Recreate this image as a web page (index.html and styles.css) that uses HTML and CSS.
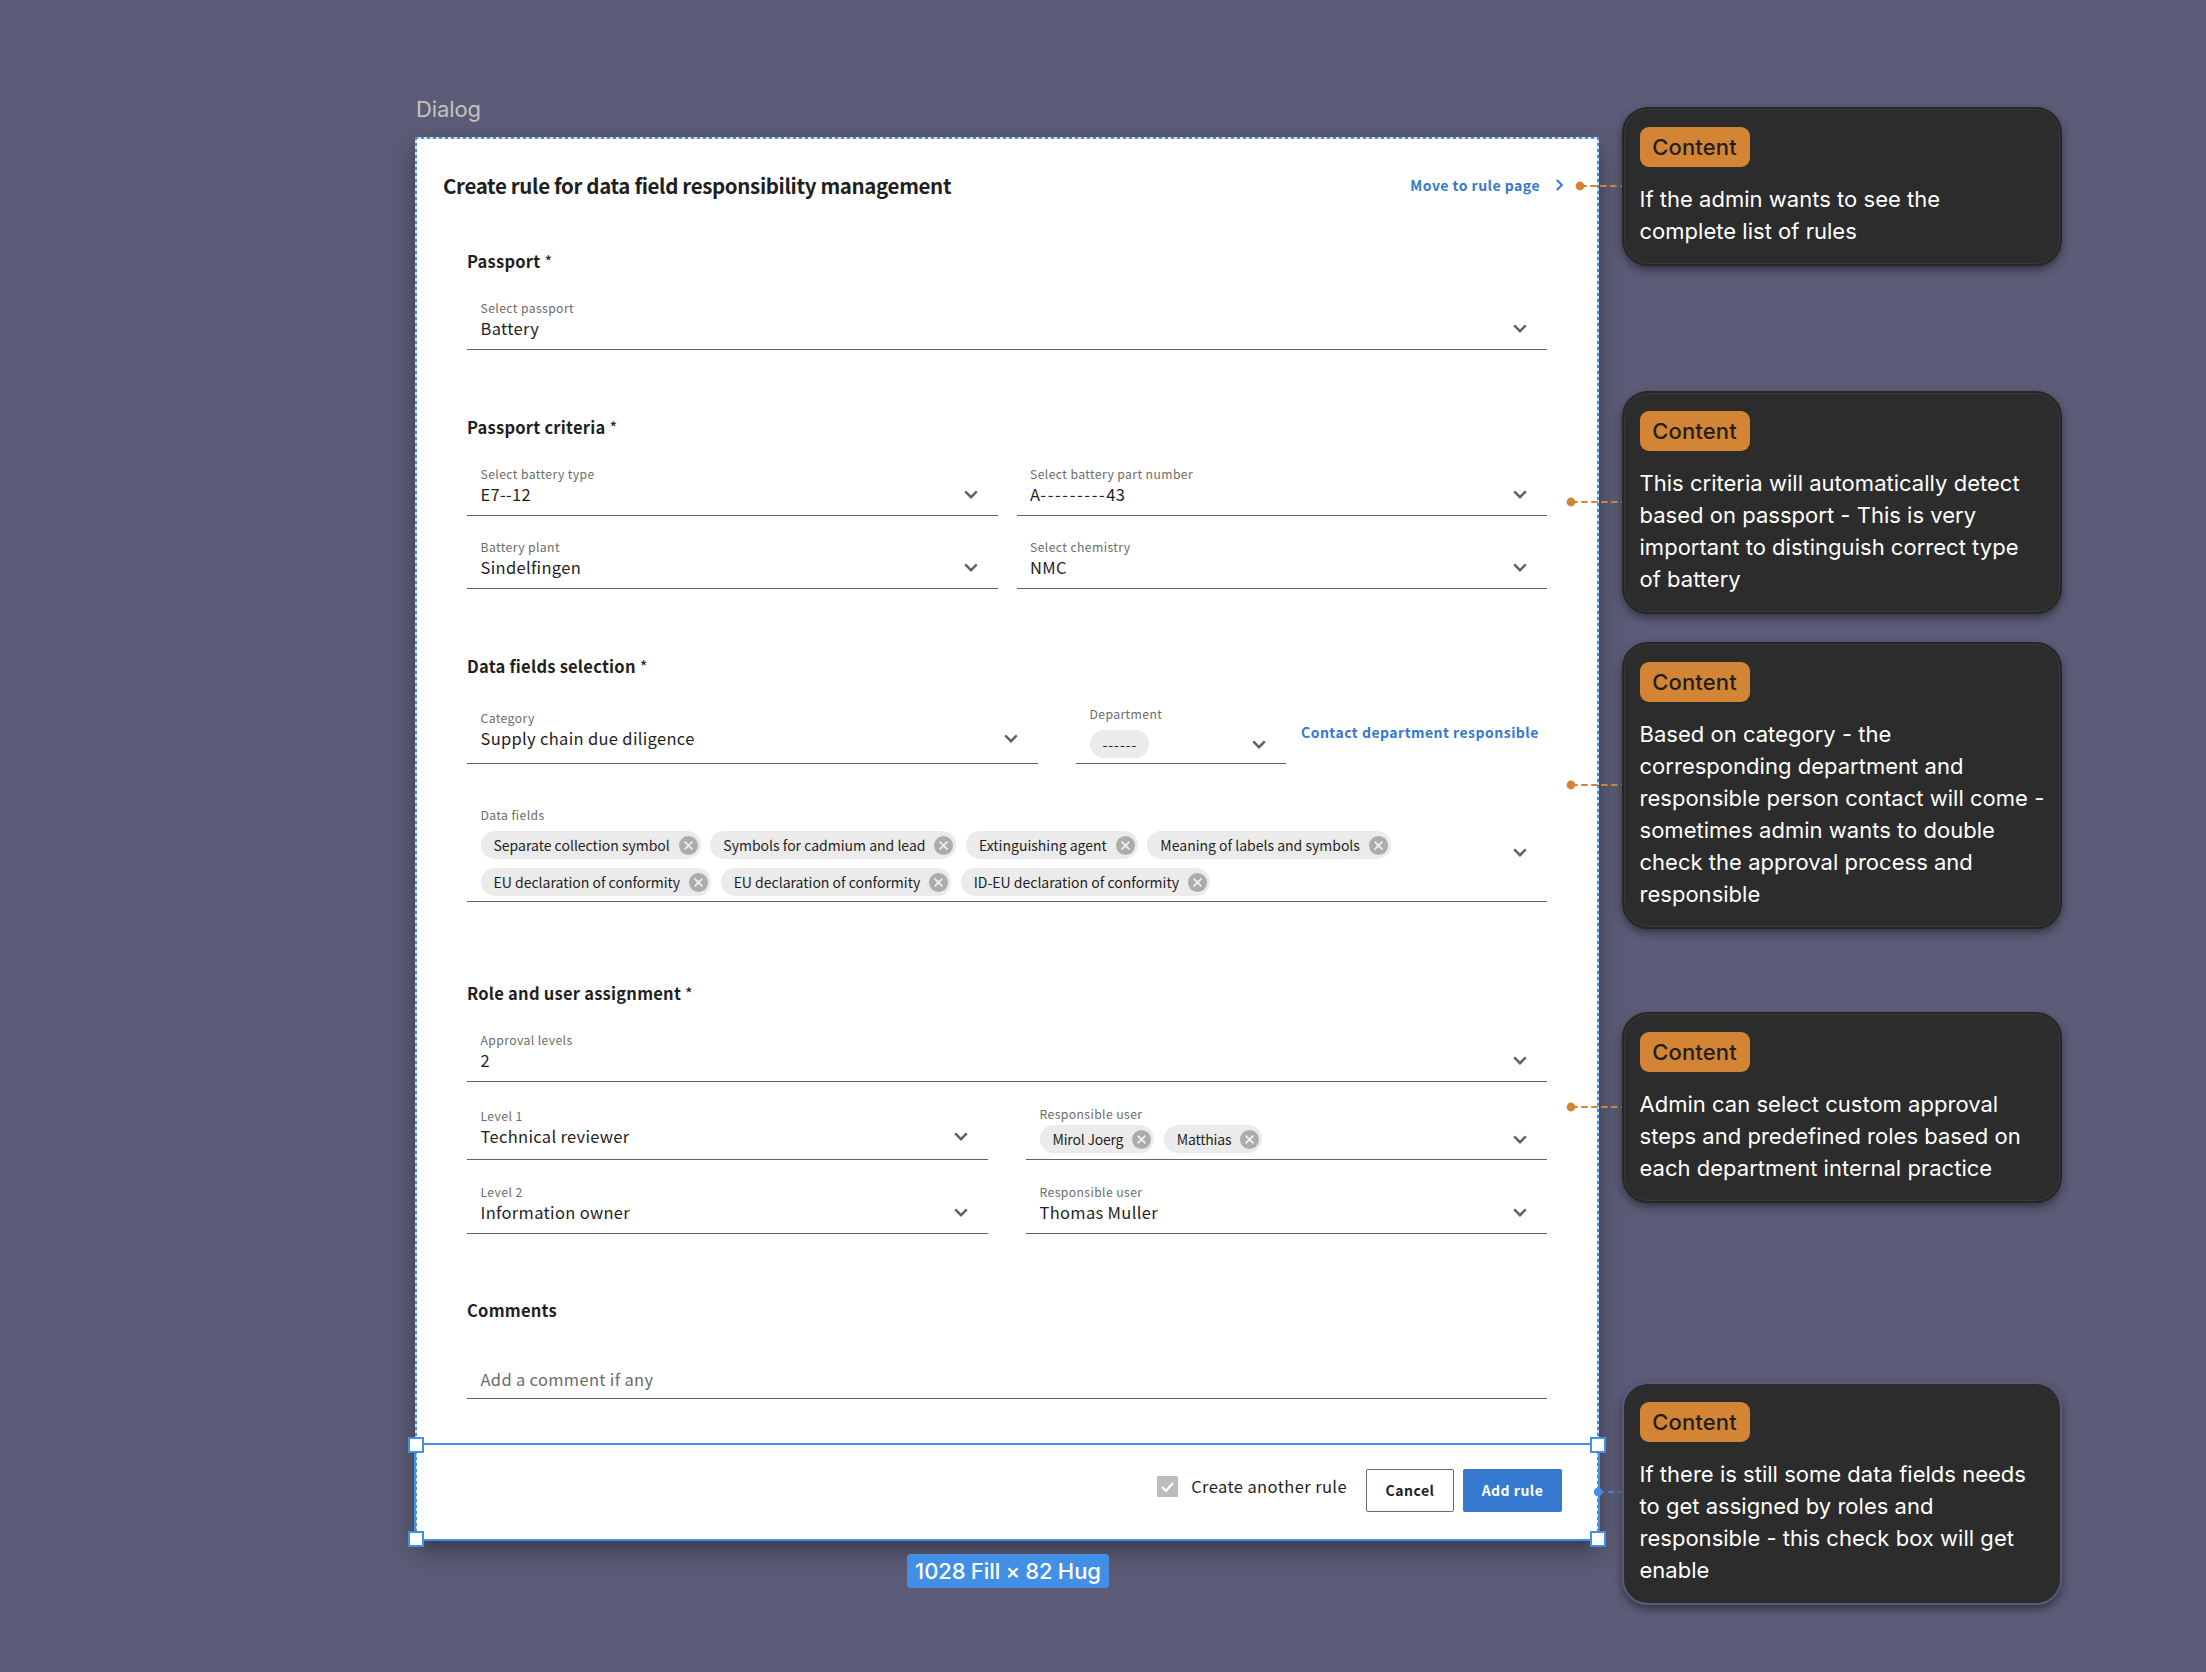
FILE: index.html
```
<!DOCTYPE html>
<html lang="en">
<head>
  <meta charset="UTF-8" />
  <meta name="viewport" content="width=device-width, initial-scale=1" />
  <title>Create rule for data field responsibility management</title>
  <link rel="stylesheet" href="styles.css">
</head>
<body>
  <!-- shared icons -->
  <svg class="sprite" width="0" height="0">
    <symbol id="chevron" viewBox="0 0 14 9">
      <path d="M1.2 1.3 L7 7.2 L12.8 1.3" fill="none" stroke="#606060" stroke-width="2.4" />
    </symbol>
    <symbol id="remove" viewBox="0 0 19 19">
      <circle cx="9.5" cy="9.5" r="9.5" fill="#abadac" />
      <path d="M5.6 5.6 L13.4 13.4 M13.4 5.6 L5.6 13.4" stroke="#f2f2f2" stroke-width="1.6" />
    </symbol>
    <symbol id="link-orange" viewBox="0 0 56 10">
      <circle cx="5" cy="5" r="4.4" fill="#d38434" />
      <path d="M5 5 H56" stroke="#d38434" stroke-width="2" stroke-dasharray="6.5 3.5" stroke-dashoffset="-0.2" />
    </symbol>
  </svg>

  <div class="canvas">
    <div class="frame-name">Dialog</div>

    <div class="dialog">
      <div class="dialog-header">
        <h2>Create rule for data field responsibility management</h2>
        <a class="text-link">Move to rule page
          <svg class="next" width="9" height="12" viewBox="0 0 9 12"><path d="M1.8 1 L6.9 6 L1.8 11" fill="none" stroke="#3679d0" stroke-width="2" /></svg>
        </a>
      </div>

      <form class="dialog-form">
        <section>
          <h3>Passport <span>*</span></h3>
          <div class="field">
            <label>Select passport</label>
            <div class="value">Battery <svg class="chevron"><use href="#chevron" /></svg></div>
          </div>
        </section>

        <section>
          <h3>Passport criteria <span>*</span></h3>
          <div class="criteria">
            <div class="field">
              <label>Select battery type</label>
              <div class="value">E7--12 <svg class="chevron"><use href="#chevron" /></svg></div>
            </div>
            <div class="field">
              <label>Select battery part number</label>
              <div class="value"><span>A<span class="dashes">---------</span>43</span> <svg class="chevron"><use href="#chevron" /></svg></div>
            </div>
            <div class="field">
              <label>Battery plant</label>
              <div class="value">Sindelfingen <svg class="chevron"><use href="#chevron" /></svg></div>
            </div>
            <div class="field">
              <label>Select chemistry</label>
              <div class="value">NMC <svg class="chevron"><use href="#chevron" /></svg></div>
            </div>
          </div>
        </section>

        <section class="data-selection">
          <h3>Data fields selection <span>*</span></h3>
          <div class="category-row">
            <div class="field category">
              <label>Category</label>
              <div class="value">Supply chain due diligence <svg class="chevron"><use href="#chevron" /></svg></div>
            </div>
            <div class="field department">
              <label>Department</label>
              <div class="value chip-value">
                <div class="chips"><span class="chip plain">------</span></div>
                <svg class="chevron"><use href="#chevron" /></svg>
              </div>
            </div>
            <a class="text-link contact">Contact department responsible</a>
          </div>
          <div class="field data-fields">
            <label>Data fields</label>
            <div class="value chip-value">
              <div class="chips">
                <span class="chip">Separate collection symbol <svg><use href="#remove" /></svg></span>
                <span class="chip">Symbols for cadmium and lead <svg><use href="#remove" /></svg></span>
                <span class="chip">Extinguishing agent <svg><use href="#remove" /></svg></span>
                <span class="chip">Meaning of labels and symbols <svg><use href="#remove" /></svg></span>
                <span class="chip">EU declaration of conformity <svg><use href="#remove" /></svg></span>
                <span class="chip">EU declaration of conformity <svg><use href="#remove" /></svg></span>
                <span class="chip">ID-EU declaration of conformity <svg><use href="#remove" /></svg></span>
              </div>
              <svg class="chevron"><use href="#chevron" /></svg>
            </div>
          </div>
        </section>

        <section class="roles">
          <h3>Role and user assignment <span>*</span></h3>
          <div class="field">
            <label>Approval levels</label>
            <div class="value">2 <svg class="chevron"><use href="#chevron" /></svg></div>
          </div>
          <div class="role-row">
            <div class="field level-one">
              <label>Level 1</label>
              <div class="value">Technical reviewer <svg class="chevron"><use href="#chevron" /></svg></div>
            </div>
            <div class="field users">
              <label>Responsible user</label>
              <div class="value chip-value">
                <div class="chips">
                  <span class="chip">Mirol Joerg <svg><use href="#remove" /></svg></span>
                  <span class="chip">Matthias <svg><use href="#remove" /></svg></span>
                </div>
                <svg class="chevron"><use href="#chevron" /></svg>
              </div>
            </div>
          </div>
          <div class="role-row">
            <div class="field">
              <label>Level 2</label>
              <div class="value">Information owner <svg class="chevron"><use href="#chevron" /></svg></div>
            </div>
            <div class="field">
              <label>Responsible user</label>
              <div class="value">Thomas Muller <svg class="chevron"><use href="#chevron" /></svg></div>
            </div>
          </div>
        </section>

        <section class="comments">
          <h3>Comments</h3>
          <div class="field">
            <div class="value">Add a comment if any</div>
          </div>
        </section>
      </form>

      <div class="dialog-footer">
        <div class="checkbox">
          <svg width="21" height="21" viewBox="0 0 21 21">
            <rect width="21" height="21" rx="1.5" fill="#bcbcbc" />
            <path d="M5 11 L9 14.8 L16 7" fill="none" stroke="#fff" stroke-width="2.2" />
          </svg>
          <span>Create another rule</span>
        </div>
        <button type="button" class="btn btn-cancel">Cancel</button>
        <button type="button" class="btn btn-add">Add rule</button>
      </div>

      <!-- selected layer outline with its handles -->
      <div class="outline"></div>
      <div class="selection">
        <i class="handle tl"></i>
        <i class="handle tr"></i>
        <i class="handle bl"></i>
        <i class="handle br"></i>
        <div class="size">1028 Fill × 82 Hug</div>
      </div>
    </div>

    <svg class="connector c1"><use href="#link-orange" /></svg>
    <svg class="connector c2"><use href="#link-orange" /></svg>
    <svg class="connector c3"><use href="#link-orange" /></svg>
    <svg class="connector c4"><use href="#link-orange" /></svg>
    <svg class="connector c5" viewBox="0 0 56 10">
      <circle cx="5" cy="5" r="4.2" fill="#4290e6" />
      <path d="M5 5 H56" stroke="#4290e6" stroke-width="1.6" stroke-dasharray="6 4" />
    </svg>

    <div class="note n1">
      <div class="tag">Content</div>
      <p>If the admin wants to see the<br>complete list of rules</p>
    </div>
    <div class="note n2">
      <div class="tag">Content</div>
      <p>This criteria will automatically detect<br>based on passport - This is very<br>important to distinguish correct type<br>of battery</p>
    </div>
    <div class="note n3">
      <div class="tag">Content</div>
      <p>Based on category - the<br>corresponding department and<br>responsible person contact will come -<br>sometimes admin wants to double<br>check the approval process and<br>responsible</p>
    </div>
    <div class="note n4">
      <div class="tag">Content</div>
      <p>Admin can select custom approval<br>steps and predefined roles based on<br>each department internal practice</p>
    </div>
    <div class="note n5">
      <div class="tag">Content</div>
      <p>If there is still some data fields needs<br>to get assigned by roles and<br>responsible - this check box will get<br>enable</p>
    </div>
  </div>
</body>
</html>
```
FILE: styles.css
```
* {
  box-sizing: border-box;
}
body {
  margin: 0;
  background: #5c5c78;
  font-family: 'Noto Sans CJK SC', 'Open Sans', sans-serif;
  color: #1f1f1f;
}
h2, h3, p {
  margin: 0;
}
.sprite {
  position: absolute;
}
.canvas {
  position: relative;
  width: 2206px;
  height: 1672px;
  overflow: hidden;
}
.frame-name {
  position: absolute;
  left: 416px;
  top: 93px;
  font: 400 22px/32px Inter, sans-serif;
  letter-spacing: -0.1px;
  color: #c4c2bd;
}

/* dialog */
.dialog {
  position: absolute;
  left: 416px;
  top: 137px;
  width: 1182px;
  height: 1403px;
  background: #fff;
  display: flex;
  flex-direction: column;
  box-shadow: 0 10px 22px rgba(20, 20, 25, 0.5);
}
.outline {
  position: absolute;
  inset: 0 -1px -1px;
  background:
    repeating-linear-gradient(90deg, #4290e6 0 3px, #cfe0f5 3px 6px) 0 0 / 100% 2px no-repeat,
    repeating-linear-gradient(90deg, #4290e6 0 3px, #cfe0f5 3px 6px) 0 100% / 100% 2px no-repeat,
    repeating-linear-gradient(180deg, #4290e6 0 3px, #cfe0f5 3px 6px) 0 0 / 2px 100% no-repeat,
    repeating-linear-gradient(180deg, #4290e6 0 3px, #cfe0f5 3px 6px) 100% 0 / 2px 100% no-repeat;
}
.dialog-header {
  height: 97px;
  padding: 0 34px 1px 27px;
  display: flex;
  justify-content: space-between;
  align-items: center;
}
.dialog-header h2 {
  font-size: 20.5px;
  line-height: 28px;
  letter-spacing: -0.36px;
}
.text-link {
  display: flex;
  align-items: center;
  font-size: 14px;
  line-height: 20px;
  font-weight: bold;
  letter-spacing: 0.48px;
  color: #3679d0;
}
.next {
  margin-left: 15px;
}
.dialog-form {
  flex: 1;
  padding: 15px 51px 0;
}
section {
  margin-bottom: 65px;
}
h3 {
  margin-bottom: 27px;
  font-size: 16.5px;
  line-height: 24px;
  letter-spacing: 0.24px;
}
h3 span {
  font-weight: 400;
}

/* fields */
.field {
  height: 50px;
  padding: 0 20px 0 13.5px;
  border-bottom: 1px solid #626262;
}
.field label {
  display: block;
  font-size: 12.2px;
  line-height: 16px;
  letter-spacing: 0.4px;
  color: #6c6c6c;
}
.value {
  display: flex;
  justify-content: space-between;
  align-items: center;
  height: 24px;
  font-size: 16.5px;
  line-height: 24px;
  letter-spacing: 0.32px;
}
.dashes {
  letter-spacing: 1.6px;
}
.chevron {
  width: 14px;
  height: 9px;
  flex: none;
  margin-top: 1px;
}
.criteria {
  display: grid;
  grid-template-columns: 1fr 1fr;
  gap: 23px 19px;
}
.category-row {
  display: flex;
  align-items: flex-end;
  height: 59px;
}
.category {
  width: 571px;
  height: 54px;
  margin-right: 38px;
}
.department {
  width: 210px;
  height: 58px;
  margin-right: 15px;
}
.contact {
  align-self: flex-start;
  margin-top: 17px;
}
.chip-value {
  height: auto;
}
.department .chip-value {
  margin-top: 8px;
}
.data-selection {
  margin-bottom: 79px;
}
.data-fields {
  height: 95px;
  margin-top: 43px;
}
.data-fields .chip-value {
  margin-top: 8px;
  align-items: flex-start;
}
.data-fields .chevron {
  margin-top: 17px;
}
.chips {
  display: flex;
  flex-wrap: wrap;
  gap: 9px 9.5px;
  max-width: 940px;
}
.chip {
  display: flex;
  align-items: center;
  gap: 9px;
  height: 28px;
  padding: 0 3px 0 13px;
  border-radius: 14px;
  background: #ebebeb;
  font-size: 14px;
  line-height: 28px;
  letter-spacing: 0;
}
.chip svg {
  width: 19px;
  height: 19px;
}
.chip.plain {
  padding: 0 12px 0 13px;
  letter-spacing: 0.95px;
  line-height: 26px;
}
.roles {
  margin-bottom: 64px;
}
.role-row {
  display: grid;
  grid-template-columns: 1fr 1fr;
  gap: 38px;
  align-items: end;
  margin-top: 24px;
}
.level-one {
  height: 52px;
}
.users {
  height: 54px;
}
.users .chip-value {
  margin-top: 3px;
}
.users .chip {
  letter-spacing: -0.2px;
}
.comments {
  margin-bottom: 0;
}
.comments .field {
  padding-top: 18px;
}
.comments .value {
  color: #6c6c6c;
}

/* footer */
.dialog-footer {
  height: 96px;
  padding: 25px 36px 0 0;
  display: flex;
  justify-content: flex-end;
  align-items: flex-start;
}
.checkbox {
  display: flex;
  align-items: center;
  margin: 6px 19px 0 0;
  font-size: 16.5px;
  line-height: 24px;
  letter-spacing: 0.4px;
}
.checkbox span {
  margin: -1px 0 0 13px;
}
.btn {
  height: 43px;
  padding: 0 0 1px;
  border-radius: 2px;
  font: bold 14px/20px 'Noto Sans CJK SC', sans-serif;
  letter-spacing: 0.5px;
}
.btn-cancel {
  width: 88px;
  margin-right: 9px;
  border: 1px solid #6a6a6a;
  background: #fff;
  color: #1f1f1f;
}
.btn-add {
  width: 99px;
  border: none;
  background: #3679d0;
  color: #fff;
}

/* selection */
.selection {
  position: absolute;
  left: -2px;
  right: -2px;
  top: 1306px;
  bottom: -1px;
  border: 2px solid #4290e6;
}
.handle {
  position: absolute;
  width: 16px;
  height: 16px;
  background: #fff;
  border: 2px solid #4290e6;
}
.tl { left: -8px; top: -8px; }
.tr { right: -8px; top: -8px; }
.bl { left: -8px; bottom: -8px; }
.br { right: -8px; bottom: -8px; }
.size {
  position: absolute;
  left: 491px;
  top: 109px;
  width: 202px;
  height: 34px;
  border-radius: 4px;
  background: #4290e6;
  color: #fff;
  text-align: center;
  font: 500 22px/34px Inter, sans-serif;
  letter-spacing: -0.05px;
  word-spacing: -0.6px;
  white-space: nowrap;
}

/* notes */
.connector {
  position: absolute;
  left: 1566px;
  width: 56px;
  height: 10px;
}
.c1 { left: 1575px; top: 181px; }
.c2 { top: 497px; }
.c3 { top: 780px; }
.c4 { top: 1102px; }
.c5 { left: 1593px; top: 1487px; }
.note {
  position: absolute;
  left: 1622px;
  width: 440px;
  padding: 18px 0 17px 15.5px;
  border: 2px solid #262626;
  border-radius: 26px;
  background: #2c2c2c;
  box-shadow: inset 0 0 0 1px #3b3a39, 0 4px 9px rgba(20, 20, 28, 0.55);
  font: 400 22px/32px Inter, sans-serif;
  color: #fff;
}
.n1 { top: 107px; }
.n2 { top: 391px; }
.n3 { top: 642px; }
.n4 { top: 1012px; }
.n5 {
  top: 1382px;
  border-color: #5a597c;
  box-shadow: 0 4px 9px rgba(20, 20, 28, 0.55);
}
.note p {
  margin-top: 16px;
  letter-spacing: 0.02px;
  white-space: nowrap;
}
.tag {
  width: 110px;
  height: 40px;
  border-radius: 9px;
  background: #d38434;
  color: #1e1e1e;
  text-align: center;
  font-weight: 500;
  line-height: 40px;
  letter-spacing: 0.15px;
}
```
